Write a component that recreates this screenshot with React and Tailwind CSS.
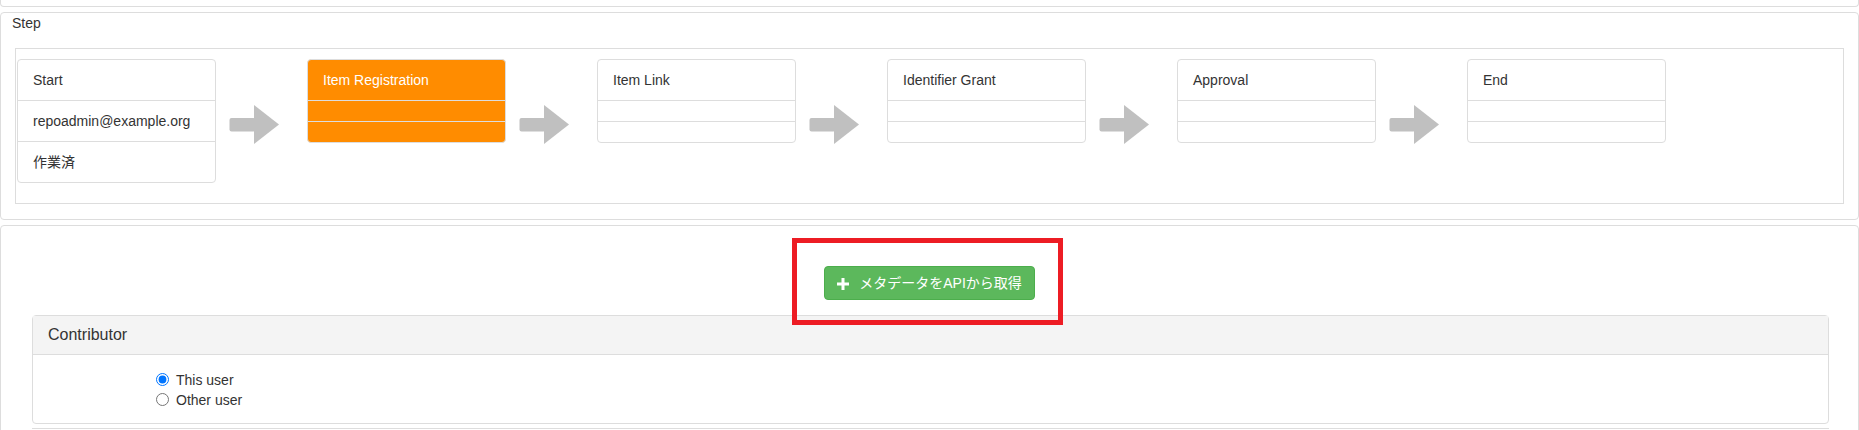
import React from "react";

const steps = [
  { title: "Start", rows: ["repoadmin@example.org", "作業済"] },
  { title: "Item Registration", rows: ["", ""], active: true },
  { title: "Item Link", rows: ["", ""] },
  { title: "Identifier Grant", rows: ["", ""] },
  { title: "Approval", rows: ["", ""] },
  { title: "End", rows: ["", ""] },
];

function Arrow() {
  return (
    <div className="w-[91px] shrink-0 pl-[13px] pt-[46px]">
      <svg width="50" height="39" viewBox="0 0 50 39">
        <rect x="0.5" y="13" width="26" height="13.5" rx="2" fill="#c0c0c0" />
        <polygon points="25,0 50,19.5 25,39" fill="#c0c0c0" />
      </svg>
    </div>
  );
}

function StepCard({ step }) {
  const active = step.active;
  const items = [step.title, ...step.rows];
  return (
    <div
      className={
        "w-[199px] shrink-0 rounded-[4px] border overflow-hidden " +
        (active ? "border-[#dddddd] bg-[#ff8c00] text-white" : "border-[#dddddd] bg-white text-[#333333]")
      }
    >
      {items.map((t, i) => (
        <div
          key={i}
          className={
            "px-[15px] leading-[20px] " +
            (t ? "py-[10px] " : "h-[21px] ") +
            (i > 0 ? "border-t border-[#dddddd]" : "")
          }
        >
          {t}
        </div>
      ))}
    </div>
  );
}

export default function App() {
  return (
    <div className="relative w-[1859px] h-[430px] overflow-hidden bg-white text-[14px] leading-[20px] text-[#333333] font-['Liberation_Sans','Noto_Sans_CJK_JP',sans-serif]">
      {/* top panel remnant */}
      <div className="h-[7px] border border-t-0 border-[#dddddd] rounded-b-[4px]" />

      {/* Step panel */}
      <div className="mt-[5px] border border-[#dddddd] rounded-[4px] px-[14px] pb-[15px]">
        <div className="-ml-[3px] leading-[20px] text-[14px]">Step</div>
        <div className="mt-[15px] border border-[#dddddd] pl-[1px] pt-[10px] pb-[20px] flex items-start">
          {steps.map((s, i) => (
            <React.Fragment key={i}>
              {i > 0 && <Arrow />}
              <StepCard step={s} />
            </React.Fragment>
          ))}
        </div>
      </div>

      {/* Main panel */}
      <div className="mt-[5px] border border-[#dddddd] rounded-t-[4px] h-[300px]">
        <div className="pt-[40px] flex justify-center">
          <button className="h-[34px] flex items-center gap-[10px] px-[12px] rounded-[4px] border border-[#4cae4c] bg-[#5cb85c] text-white text-[14px] leading-[20px]">
            <svg width="12" height="12" viewBox="0 0 12 12" className="mt-[1px]">
              <rect x="4.5" y="0" width="3" height="12" fill="#ffffff" />
              <rect x="0" y="4.5" width="12" height="3" fill="#ffffff" />
            </svg>
            <span>メタデータをAPIから取得</span>
          </button>
        </div>

        <div className="mt-[15px] ml-[31px] mr-[29px] border border-[#dddddd] rounded-[4px]">
          <div className="bg-[#f4f4f4] border-b border-[#dddddd] px-[15px] py-[10px] text-[16px] leading-[17.6px] text-[#333333]">
            Contributor
          </div>
          <div className="pl-[123px] pt-[15px] pb-[13px]">
            <label className="flex items-center h-[20px]">
              <input type="radio" name="contrib" defaultChecked className="m-0 w-[13px] h-[13px]" />
              <span className="ml-[7px]">This user</span>
            </label>
            <label className="flex items-center h-[20px]">
              <input type="radio" name="contrib" className="m-0 w-[13px] h-[13px]" />
              <span className="ml-[7px]">Other user</span>
            </label>
          </div>
        </div>
        <div className="mt-[4px] ml-[31px] mr-[29px] border-t border-[#dddddd]" />
      </div>

      {/* red annotation */}
      <div className="absolute left-[792px] top-[238px] w-[271px] h-[87px] border-[5px] border-[#ed1c24]" />
    </div>
  );
}
